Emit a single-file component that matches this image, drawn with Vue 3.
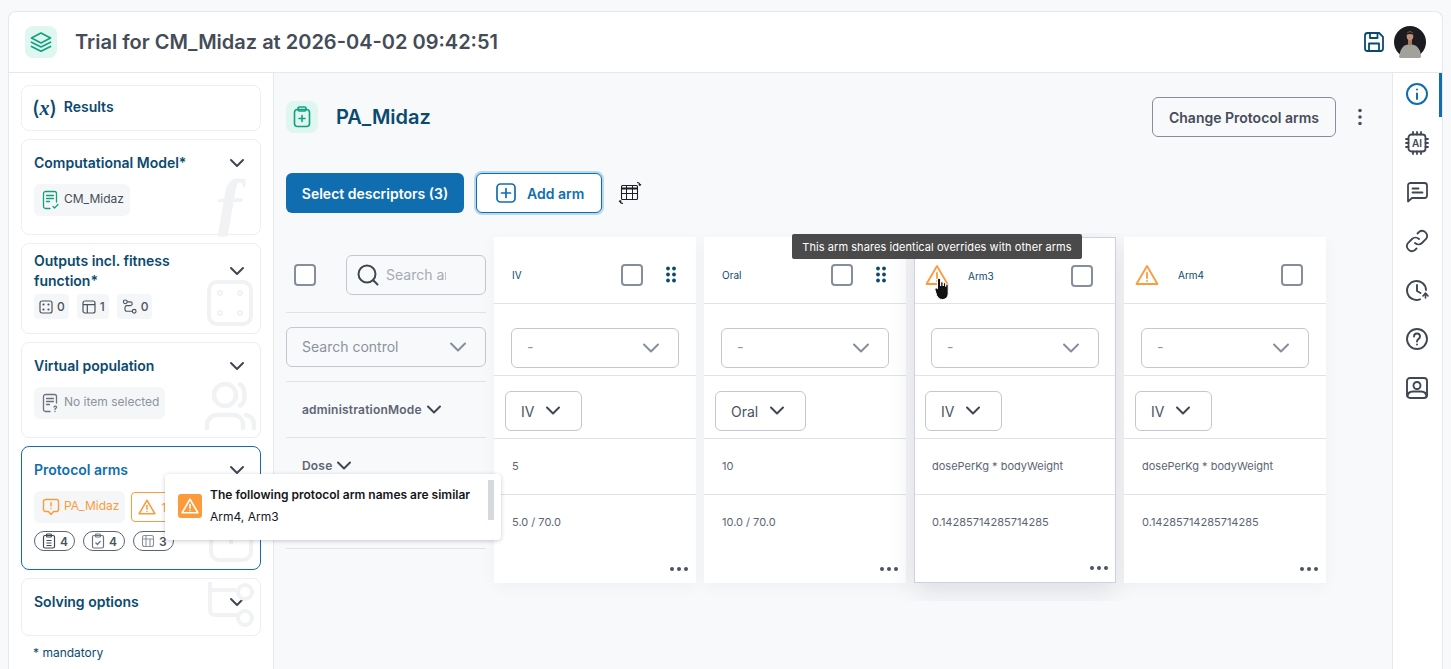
<script setup>
const arms = [
  { name: 'IV', warn: false, hovered: false, mode: 'IV', dose: '5', ratio: '5.0 / 70.0' },
  { name: 'Oral', warn: false, hovered: false, mode: 'Oral', dose: '10', ratio: '10.0 / 70.0' },
  { name: 'Arm3', warn: true, hovered: true, mode: 'IV', dose: 'dosePerKg * bodyWeight', ratio: '0.14285714285714285' },
  { name: 'Arm4', warn: true, hovered: false, mode: 'IV', dose: 'dosePerKg * bodyWeight', ratio: '0.14285714285714285' },
]
const dots = [[1, 1], [7, 1], [1, 7], [7, 7], [1, 13], [7, 13]]
</script>

<template>
  <div class="app">
    <header class="topbar">
      <span class="icon-tile">
        <svg width="24" height="24" viewBox="0 0 24 24" fill="none" stroke="#12a17d" stroke-width="1.700" stroke-linejoin="round" stroke-linecap="round">
          <path d="M12 3 2.500 8 12 13l9.500-5z" />
          <path d="M2.500 12.200 12 17l9.500-4.800" />
          <path d="M2.500 16.400 12 21.200l9.500-4.800" />
        </svg>
      </span>
      <h1>Trial for CM_Midaz at 2026-04-02 09:42:51</h1>
      <svg class="save" width="22" height="22" viewBox="0 0 22 22" fill="none" stroke="#0b4a6f" stroke-width="1.800" stroke-linejoin="round">
        <path d="M2 4.500A2.500 2.500 0 0 1 4.500 2h11.700L20 5.800v11.700a2.500 2.500 0 0 1-2.500 2.500h-13A2.500 2.500 0 0 1 2 17.500z" />
        <path d="M7 2v5h7.500V2M6 20v-7.500h10V20" />
      </svg>
      <svg class="avatar" width="32" height="32" viewBox="0 0 32 32">
        <circle cx="16" cy="16" r="16" fill="#1c1c20" />
        <path d="M5 31c1-6 3-11 7-12l4-1 4 1c4 1 7 6 7 12a16 16 0 0 1-22 0z" fill="#a3a19c" />
        <rect x="14" y="12" width="4" height="7" fill="#a9785f" />
        <ellipse cx="16" cy="10" rx="3.300" ry="4.400" fill="#c09078" />
        <path d="M12.500 9c0-4 7-4 7 0-2-1.500-5-1.500-7 0z" fill="#201a18" />
      </svg>
    </header>

    <div class="body">
      <aside class="sidebar">
        <section class="card results">
          <span class="fx">(<i>x</i>)</span>
          <span class="card-title">Results</span>
        </section>

        <section class="card model">
          <div class="card-head">
            <span class="card-title">Computational Model*</span>
            <svg class="chev" width="18" height="18" viewBox="0 0 18 18"><path d="M3 6l6 6 6-6" /></svg>
          </div>
          <div class="chip">
            <svg width="18" height="20" viewBox="0 0 18 20" fill="none" stroke="#12a17d" stroke-width="1.300" stroke-linecap="round" stroke-linejoin="round">
              <path d="M8 18.500H3.500a2 2 0 0 1-2-2v-13a2 2 0 0 1 2-2h9a2 2 0 0 1 2 2V12" />
              <path d="M4.500 5.500h7M4.500 8.500h7M4.500 11.500h3M11 16.500l1.500 1.500 3.500-3.500" />
            </svg>
            <span class="chip-text">CM_Midaz</span>
          </div>
          <span class="ghost-f">ƒ</span>
        </section>

        <section class="card outputs">
          <div class="card-head">
            <span class="card-title">Outputs incl. fitness function*</span>
            <svg class="chev" width="18" height="18" viewBox="0 0 18 18"><path d="M3 6l6 6 6-6" /></svg>
          </div>
          <div class="mini-row">
            <span class="mini">
              <svg width="14" height="14" viewBox="0 0 14 14" fill="none" stroke="#4a5360" stroke-width="1.200"><rect x="1" y="1" width="12" height="12" rx="2" /><circle cx="4.500" cy="4.500" r=".5" /><circle cx="9.500" cy="4.500" r=".5" /><circle cx="4.500" cy="9.500" r=".5" /><circle cx="9.500" cy="9.500" r=".5" /></svg>
              0
            </span>
            <span class="mini">
              <svg width="14" height="14" viewBox="0 0 14 14" fill="none" stroke="#4a5360" stroke-width="1.200"><rect x="1" y="1" width="12" height="12" rx="2" /><path d="M1 4.700h12M5.300 4.700V13" /></svg>
              1
            </span>
            <span class="mini">
              <svg width="15" height="15" viewBox="0 0 16 16" fill="none" stroke="#4a5360" stroke-width="1.200"><circle cx="3.500" cy="3" r="2" /><circle cx="13" cy="13" r="2" /><path d="M5.500 3H9c2.500 0 2.500 4 0 4H5c-2.500 0-2.500 6 0 6h6" /></svg>
              0
            </span>
          </div>
          <svg class="ghost ghost-die" width="46" height="46" viewBox="0 0 46 46" fill="none" stroke="#f1f2f4" stroke-width="4"><rect x="2" y="2" width="42" height="42" rx="8" /><circle cx="13" cy="13" r="1" /><circle cx="33" cy="13" r="1" /><circle cx="13" cy="33" r="1" /><circle cx="33" cy="33" r="1" /></svg>
        </section>

        <section class="card population">
          <div class="card-head">
            <span class="card-title">Virtual population</span>
            <svg class="chev" width="18" height="18" viewBox="0 0 18 18"><path d="M3 6l6 6 6-6" /></svg>
          </div>
          <div class="chip muted">
            <svg width="18" height="20" viewBox="0 0 18 20" fill="none" stroke="#6b7280" stroke-width="1.300" stroke-linecap="round" stroke-linejoin="round">
              <path d="M8 18.500H3.500a2 2 0 0 1-2-2v-13a2 2 0 0 1 2-2h9a2 2 0 0 1 2 2V10" />
              <path d="M4.500 5.500h7M4.500 8.500h7M4.500 11.500h3M12 14c.5-1.500 3-1 2.500.5-.3.800-1.500.8-1.500 2M13 18.500v.1" />
            </svg>
            <span class="chip-text">No item selected</span>
          </div>
          <svg class="ghost ghost-users" width="52" height="48" viewBox="0 0 52 48" fill="none" stroke="#f1f2f4" stroke-width="4.500" stroke-linecap="round"><circle cx="21" cy="13" r="11" /><path d="M3 46v-3c0-6 5-10 10-10h16c6 0 10 4 10 10v3M36 2.500c6 2 6 19 0 21M42 33c5 1 8 5 8 10v3" /></svg>
        </section>

        <section class="card protocol">
          <div class="card-head">
            <span class="card-title active">Protocol arms</span>
            <svg class="chev" width="18" height="18" viewBox="0 0 18 18"><path d="M3 6l6 6 6-6" /></svg>
          </div>
          <div class="protocol-chips">
            <div class="chip warn">
              <svg width="18" height="18" viewBox="0 0 18 18" fill="none" stroke="#fd9a3b" stroke-width="1.400" stroke-linecap="round" stroke-linejoin="round">
                <path d="M3.500 1.500h11a2 2 0 0 1 2 2v8a2 2 0 0 1-2 2h-3L9 16.500l-2.500-3h-3a2 2 0 0 1-2-2v-8a2 2 0 0 1 2-2zM9 4.500V8M9 10.500v.1" />
              </svg>
              <span class="chip-text">PA_Midaz</span>
            </div>
            <div class="warn-count">
              <svg width="18" height="18" viewBox="0 0 24 24" fill="none" stroke="#fd9a3b" stroke-width="2" stroke-linecap="round" stroke-linejoin="round"><path d="M12 3 1.500 21h21zM12 10v5M12 18v.1" /></svg>
              1
            </div>
          </div>
          <div class="pills">
            <span class="pill">
              <svg width="14" height="16" viewBox="0 0 14 16" fill="none" stroke="#3f4753" stroke-width="1.200"><rect x="1.500" y="2.500" width="11" height="12.500" rx="1.500" /><rect x="4.500" y="1" width="5" height="3" rx="1" /><path d="M4.500 7.500h5M4.500 10h5M4.500 12.500h5" /></svg>
              4
            </span>
            <span class="pill">
              <svg width="14" height="16" viewBox="0 0 14 16" fill="none" stroke="#6b7280" stroke-width="1.200"><rect x="1.500" y="2.500" width="11" height="12.500" rx="1.500" /><rect x="4.500" y="1" width="5" height="3" rx="1" /><path d="M4.500 9.500l2 2 3-3.500" /></svg>
              4
            </span>
            <span class="pill">
              <svg width="14" height="14" viewBox="0 0 14 14" fill="none" stroke="#8b93a0" stroke-width="1.100"><rect x="1.500" y="1.500" width="11" height="11" rx="2" /><path d="M1.500 5h11M5 1.500v11M9 5v7.500" /></svg>
              3
            </span>
          </div>
          <svg class="ghost ghost-plus" width="44" height="30" viewBox="0 0 44 30" fill="none" stroke="#f1f2f4" stroke-width="4"><path d="M2 0v20a8 8 0 0 0 8 8h24a8 8 0 0 0 8-8V0M22 0v12" /></svg>

          <div class="similar-popup">
            <span class="warn-tile">
              <svg width="18" height="18" viewBox="0 0 24 24" fill="none" stroke="#fff" stroke-width="2.200" stroke-linecap="round" stroke-linejoin="round"><path d="M12 3 1.500 21h21zM12 10v5M12 18v.1" /></svg>
            </span>
            <div>
              <div class="popup-title">The following protocol arm names are similar</div>
              <div class="popup-text">Arm4, Arm3</div>
            </div>
            <span class="popup-thumb"></span>
          </div>
        </section>

        <section class="card solving">
          <div class="card-head">
            <span class="card-title">Solving options</span>
            <svg class="chev" width="18" height="18" viewBox="0 0 18 18"><path d="M3 6l6 6 6-6" /></svg>
          </div>
          <svg class="ghost ghost-route" width="46" height="46" viewBox="0 0 46 46" fill="none" stroke="#f1f2f4" stroke-width="4"><path d="M2 0v28a5 5 0 0 0 5 5h23M2 8h26" /><circle cx="37" cy="10" r="7" /><circle cx="37" cy="36" r="7" /></svg>
        </section>

        <p class="mandatory">* mandatory</p>
      </aside>

      <main class="main">
        <div class="page-head">
          <span class="icon-tile">
            <svg width="20" height="22" viewBox="0 0 20 22" fill="none" stroke="#12a17d" stroke-width="1.600" stroke-linecap="round" stroke-linejoin="round">
              <rect x="2.500" y="3.500" width="15" height="17" rx="3" />
              <rect x="6" y="1" width="8" height="4" rx="1.200" />
              <path d="M10 9.500v6M7 12.500h6" />
            </svg>
          </span>
          <h2>PA_Midaz</h2>
          <button class="btn-outline">Change Protocol arms</button>
          <svg class="kebab" width="4" height="18" viewBox="0 0 4 18" fill="#4a5360"><circle cx="2" cy="2.500" r="1.800" /><circle cx="2" cy="9" r="1.800" /><circle cx="2" cy="15.500" r="1.800" /></svg>
        </div>

        <div class="actions">
          <button class="btn-primary">Select descriptors (3)</button>
          <button class="btn-add">
            <svg width="20" height="20" viewBox="0 0 20 20" fill="none" stroke="#106eb0" stroke-width="1.700" stroke-linecap="round"><rect x="1" y="1" width="18" height="18" rx="3.500" /><path d="M10 5.500v9M5.500 10h9" /></svg>
            Add arm
          </button>
          <svg width="24" height="24" viewBox="0 0 24 24" fill="none" stroke="#1d1f24" stroke-width="1.100">
            <rect x="3.500" y="4.500" width="16" height="14" rx="1" />
            <path d="M8.500 4.500v14M14.500 4.500v14M3.500 12.500h16" stroke-width="1" />
            <path d="M3.500 7.500h16" stroke-width="2" />
            <path d="M19 1.500c2 0 3 1 3 3M22 4.500l-1.300-1M22 4.500l1-1.200M5 22.500c-2 0-3-1-3-3M2 19.500l1.300 1M2 19.500l-1 1.200" />
          </svg>
        </div>

        <div class="table">
          <div class="labels">
            <div class="labels-head">
              <span class="checkbox"></span>
              <div class="search">
                <svg width="22" height="22" viewBox="0 0 22 22" fill="none" stroke="#3f4753" stroke-width="2" stroke-linecap="round"><circle cx="10" cy="10" r="8.500" /><path d="m16.500 16.500 4 4" /></svg>
                <span>Search ar</span>
              </div>
            </div>
            <div class="labels-control">
              <div class="select control">
                <span>Search control</span>
                <svg class="chev grey" width="18" height="18" viewBox="0 0 18 18"><path d="M2 5.500l7 7 7-7" /></svg>
              </div>
            </div>
            <div class="label-row">
              administrationMode
              <svg class="chev" width="16" height="16" viewBox="0 0 16 16"><path d="M2 4.500 8 10.500l6-6" /></svg>
            </div>
            <div class="label-row">
              Dose
              <svg class="chev" width="16" height="16" viewBox="0 0 16 16"><path d="M2 4.500 8 10.500l6-6" /></svg>
            </div>
            <div class="label-row"></div>
          </div>

          <div v-for="arm in arms" :key="arm.name" class="arm" :class="{ hovered: arm.hovered }">
            <div class="arm-head" :class="{ warned: arm.warn }">
              <svg v-if="arm.warn" class="arm-warn" width="24" height="24" viewBox="0 0 24 24" fill="none" stroke="#fd9a3b" stroke-width="1.800" stroke-linecap="round" stroke-linejoin="round"><path d="M12 3 1.500 21h21zM12 10v5M12 18v.1" /></svg>
              <span class="arm-name">{{ arm.name }}</span>
              <span class="checkbox"></span>
              <svg v-if="!arm.warn" class="grip" width="10" height="18" viewBox="0 0 10 18" fill="#0b4a6f">
                <circle v-for="d in dots" :key="d.join()" :cx="d[0] + 1" :cy="d[1] + 1.500" r="1.900" />
              </svg>
            </div>
            <div class="arm-control">
              <div class="select">
                <span>-</span>
                <svg class="chev grey" width="18" height="18" viewBox="0 0 18 18"><path d="M2 5.500l7 7 7-7" /></svg>
              </div>
            </div>
            <div class="arm-mode">
              <div class="mode-select">
                {{ arm.mode }}
                <svg class="chev" width="16" height="16" viewBox="0 0 16 16"><path d="M2 4.500 8 10.500l6-6" /></svg>
              </div>
            </div>
            <div class="arm-value">{{ arm.dose }}</div>
            <div class="arm-value last">{{ arm.ratio }}</div>
            <svg class="arm-more" width="20" height="4" viewBox="0 0 20 4" fill="#4a5360"><circle cx="3" cy="2" r="2" /><circle cx="10" cy="2" r="2" /><circle cx="17" cy="2" r="2" /></svg>

            <template v-if="arm.hovered">
              <div class="tooltip">This arm shares identical overrides with other arms</div>
              <svg class="cursor" width="18" height="24" viewBox="0 0 18 24">
                <path d="M5 1.500c1 0 1.600.6 1.600 1.600V9V6c0-1.800 2.600-1.800 2.600 0v3-2c0-1.700 2.500-1.700 2.500 0v2.500-1.300c0-1.600 2.500-1.600 2.500 0V16c0 3.500-2 6.500-5.500 6.500-3 0-4.500-1.200-6-4L1 13c-.8-1.600 1.400-2.800 2.500-1.300V3.100c0-1 .6-1.600 1.500-1.600z" fill="#111" stroke="#fff" stroke-width="1" />
              </svg>
            </template>
          </div>
        </div>
      </main>

      <nav class="rail">
        <span class="rail-mark"></span>
        <svg width="24" height="24" viewBox="0 0 24 24" fill="none" stroke="#106eb0" stroke-width="2" stroke-linecap="round"><circle cx="12" cy="12" r="10" /><path d="M12 11.500V17M12 7.500v.1" /></svg>
        <svg width="24" height="24" viewBox="0 0 24 24" fill="none" stroke="#3f4753" stroke-width="1.800" stroke-linecap="round"><rect x="3.500" y="3.500" width="17" height="17" rx="3" /><path d="M8 1v2.500M12 1v2.500M16 1v2.500M8 20.500V23M12 20.500V23M16 20.500V23M1 8h2.500M1 12h2.500M1 16h2.500M20.500 8H23M20.500 12H23M20.500 16H23" /><text x="12" y="15.500" text-anchor="middle" class="ai-text">AI</text></svg>
        <svg width="24" height="24" viewBox="0 0 24 24" fill="none" stroke="#3f4753" stroke-width="1.800" stroke-linecap="round" stroke-linejoin="round"><path d="M3 5.500a2.500 2.500 0 0 1 2.500-2.500h14A2.500 2.500 0 0 1 22 5.500v10a2.500 2.500 0 0 1-2.500 2.500H7l-4 3.500zM7.500 8.500h6M7.500 12.500h10" /></svg>
        <svg width="24" height="24" viewBox="0 0 24 24" fill="none" stroke="#3f4753" stroke-width="1.800" stroke-linecap="round"><path d="M10 14a5 5 0 0 0 7 0l4-4a5 5 0 0 0-7-7l-1.500 1.500" /><path d="M14 10a5 5 0 0 0-7 0l-4 4a5 5 0 0 0 7 7l1.500-1.500" /></svg>
        <svg width="24" height="24" viewBox="0 0 24 24" fill="none" stroke="#3f4753" stroke-width="1.900" stroke-linecap="round" stroke-linejoin="round"><path d="M21 12a9.500 9.500 0 1 0-6 9.300M12 7v6l3.500 2" /><path d="M18 18l2.500-3 2.500 3M20.500 15.500V20" stroke-width="1.600" /></svg>
        <svg width="24" height="24" viewBox="0 0 24 24" fill="none" stroke="#3f4753" stroke-width="1.900" stroke-linecap="round"><circle cx="12" cy="12" r="10" /><path d="M9 9.500c0-4 6-4 6 0 0 2.500-3 2.500-3 5M12 17.500v.1" /></svg>
        <svg width="24" height="24" viewBox="0 0 24 24" fill="none" stroke="#3f4753" stroke-width="1.900" stroke-linejoin="round"><rect x="2" y="2" width="20" height="20" rx="3" /><circle cx="12" cy="9.500" r="3.500" /><path d="M2.500 21c0-4 2.500-5.500 5.500-5.500h8c3 0 5.500 1.500 5.500 5.500" /></svg>
      </nav>
    </div>
  </div>
</template>

<style scoped>
.app {
  margin: 11px 8px 0;
  height: 658px;
  background: #fff;
  border: 1px solid #e6e8ec;
  border-bottom: 0;
  border-radius: 8px 8px 0 0;
  display: flex;
  flex-direction: column;
  font-family: Inter, "Noto Sans", sans-serif;
  color: #3f4753;
  overflow: hidden;
}
.topbar {
  height: 61px;
  flex: none;
  display: flex;
  align-items: center;
  padding: 0 16px;
  border-bottom: 1px solid #e6e8ec;
  box-sizing: border-box;
}
.icon-tile {
  width: 32px;
  height: 32px;
  border-radius: 8px;
  background: #e0f6f1;
  display: flex;
  align-items: center;
  justify-content: center;
  flex: none;
}
h1 {
  margin: 0 0 0 18px;
  font-size: 20px;
  line-height: 28px;
  font-weight: 600;
  color: #454c58;
  flex: 1;
}
.save { margin-right: 9px; }
.avatar { display: block; }
.body {
  flex: 1;
  display: flex;
  min-height: 0;
}
.sidebar {
  width: 265px;
  flex: none;
  box-sizing: border-box;
  padding: 12px 12px 0;
  border-right: 1px solid #e6e8ec;
  display: flex;
  flex-direction: column;
  gap: 8px;
  position: relative;
  z-index: 2;
}
.card {
  position: relative;
  box-sizing: border-box;
  border: 1px solid #eceef1;
  border-radius: 8px;
  padding: 13px 12px 12px;
  background: #fff;
  width: 240px;
}
.results {
  height: 46px;
  display: flex;
  align-items: center;
  gap: 7px;
  padding-top: 12px;
  padding-bottom: 14px;
}
.fx {
  font-size: 20px;
  color: #0b4a6f;
  font-weight: 500;
  line-height: 1;
  white-space: nowrap;
  margin-left: -2px;
  margin-top: 2px;
}
.fx i {
  font-family: "Liberation Serif", serif;
  font-weight: 700;
}
.card-title {
  font-size: 14px;
  font-weight: 600;
  line-height: 20px;
  color: #0b4a6f;
}
.card-title.active { color: #106eb0; }
.card-head {
  display: flex;
  justify-content: space-between;
  align-items: center;
}
.card-head .card-title { max-width: 175px; }
.chev {
  fill: none;
  stroke: #3f4753;
  stroke-width: 2;
  stroke-linecap: round;
  stroke-linejoin: round;
  flex: none;
}
.card-head .chev { margin-right: 2px; }
.chev.grey { stroke: #868e9c; }
.chip {
  display: inline-flex;
  align-items: center;
  gap: 4px;
  height: 32px;
  box-sizing: border-box;
  padding: 0 6px 0 8px;
  border-radius: 6px;
  background: #f5f6f8;
  font-size: 12px;
  color: #454c58;
  position: relative;
  z-index: 1;
}
.chip-text { margin-bottom: 4px; }
.chip.muted { color: #8b93a0; }
.chip.warn { color: #fd9a3b; }
.model { height: 96px; }
.model .chip { margin-top: 11px; }
.ghost-f {
  position: absolute;
  right: 12px;
  top: 26px;
  font-family: "Liberation Serif", serif;
  font-style: italic;
  font-weight: 700;
  font-size: 72px;
  line-height: 1;
  color: #f1f2f4;
}
.outputs { height: 91px; padding-top: 7px; }
.mini-row {
  display: flex;
  gap: 8px;
  margin-top: 3px;
  position: relative;
  z-index: 1;
}
.mini {
  display: inline-flex;
  align-items: center;
  gap: 4px;
  height: 25px;
  padding: 0 4px 0 5px;
  border-radius: 4px;
  background: #f5f6f8;
  font-size: 12px;
  font-weight: 500;
  color: #4a5360;
}
.ghost { position: absolute; }
.ghost-die { right: 7px; bottom: 7px; }
.population { height: 96px; }
.population .chip { margin-top: 11px; }
.ghost-users { right: 4px; bottom: 7px; }
.protocol {
  height: 124px;
  border-color: #106eb0;
}
.protocol-chips {
  display: flex;
  gap: 6px;
  margin-top: 11px;
  position: relative;
  z-index: 1;
}
.warn-count {
  display: flex;
  align-items: center;
  gap: 5px;
  height: 30px;
  width: 60px;
  margin-top: 1px;
  box-sizing: border-box;
  padding-left: 6px;
  border: 1px solid #fd9a3b;
  border-radius: 4px;
  font-size: 12px;
  color: #fd9a3b;
}
.pills {
  display: flex;
  gap: 8px;
  margin-top: 8px;
  position: relative;
  z-index: 1;
}
.pill {
  display: inline-flex;
  align-items: center;
  gap: 4px;
  height: 20px;
  box-sizing: border-box;
  width: 41px;
  padding-left: 7px;
  border: 1px solid #5d6573;
  border-radius: 10px;
  font-size: 12px;
  font-weight: 600;
  color: #4a5360;
}
.pill:nth-child(2) { width: 42px; }
.ghost-plus { right: 7px; bottom: 7px; }
.similar-popup {
  position: absolute;
  left: 143px;
  top: 27px;
  width: 336px;
  height: 66px;
  z-index: 5;
  box-sizing: border-box;
  padding: 13px 12px 13px 13px;
  display: flex;
  gap: 8px;
  background: #fff;
  border-radius: 4px;
  box-shadow: 0 1px 4px rgba(16, 24, 40, .22);
  white-space: nowrap;
  font-size: 12px;
}
.warn-tile {
  width: 24px;
  height: 24px;
  margin-top: 7px;
  border-radius: 3px;
  background: #fd9a3b;
  display: flex;
  align-items: center;
  justify-content: center;
  flex: none;
}
.popup-title {
  font-size: 12px;
  font-weight: 600;
  line-height: 16px;
  color: #14161a;
}
.popup-text {
  margin-top: 6px;
  line-height: 16px;
  color: #14161a;
}
.popup-thumb {
  position: absolute;
  right: 7px;
  top: 6px;
  width: 6px;
  height: 40px;
  background: #d5d8dd;
}
.solving { height: 58px; padding-top: 13px; }
.ghost-route { right: 6px; bottom: 7px; }
.mandatory {
  margin: 1px 0 0 12px;
  font-size: 12px;
  line-height: 16px;
  color: #0b4a6f;
}
.main {
  flex: 1;
  min-width: 0;
  background: #f8f9fb;
  padding: 24px 12px 0;
  box-sizing: border-box;
  overflow: hidden;
}
.page-head {
  display: flex;
  align-items: center;
  height: 40px;
}
h2 {
  margin: 0 0 0 18px;
  font-size: 20px;
  font-weight: 600;
  color: #0b4a6f;
  flex: 1;
}
.btn-outline {
  width: 184px;
  height: 40px;
  background: transparent;
  border: 1px solid #868e9c;
  border-radius: 6px;
  font: 600 14px Inter, sans-serif;
  color: #454c58;
}
.kebab { margin: 0 18px 0 22px; }
.actions {
  display: flex;
  align-items: center;
  gap: 12px;
  margin-top: 36px;
}
.btn-primary {
  width: 178px;
  height: 40px;
  border: 0;
  border-radius: 6px;
  background: #106eb0;
  color: #fff;
  font: 600 14px Inter, sans-serif;
}
.btn-add {
  width: 126px;
  height: 40px;
  display: flex;
  align-items: center;
  gap: 11px;
  padding: 0 0 0 19px;
  border: 1px solid #106eb0;
  border-radius: 6px;
  background: #fff;
  box-shadow: 0 0 0 2px #b9d8ee;
  color: #106eb0;
  font: 600 14px Inter, sans-serif;
}
.actions > svg { margin-left: 4px; }
.table {
  display: flex;
  gap: 8px;
  margin-top: 20px;
  padding: 4px 0 18px;
  overflow: hidden;
  align-items: flex-start;
}
.labels { width: 200px; flex: none; font-size: 12px; }
.labels-head {
  height: 76px;
  display: flex;
  align-items: center;
  gap: 30px;
  padding-left: 8px;
  border-bottom: 1px solid #dfe2e7;
  box-sizing: border-box;
}
.checkbox {
  width: 22px;
  height: 22px;
  box-sizing: border-box;
  border: 2px solid #868e9c;
  border-radius: 4px;
  flex: none;
  background: #fff;
}
.search {
  width: 140px;
  height: 40px;
  box-sizing: border-box;
  border: 1px solid #c3c8d0;
  border-radius: 6px;
  display: flex;
  align-items: center;
  gap: 7px;
  padding-left: 10px;
  overflow: hidden;
  font-size: 14px;
  color: #a5abb5;
  white-space: nowrap;
}
.search span { width: 60px; overflow: hidden; }
.labels-control {
  height: 69px;
  box-sizing: border-box;
  padding-top: 14px;
  border-bottom: 1px solid #dfe2e7;
}
.select {
  width: 168px;
  height: 40px;
  box-sizing: border-box;
  border: 1px solid #c3c8d0;
  border-radius: 6px;
  display: flex;
  align-items: center;
  justify-content: space-between;
  padding: 0 18px 0 15px;
  font-size: 14px;
  color: #8b93a0;
  background: #fff;
}
.select span { margin-bottom: 2px; }
.select.control { width: 200px; background: transparent; }
.label-row {
  height: 56px;
  display: flex;
  align-items: center;
  gap: 4px;
  padding-left: 16px;
  font-weight: 600;
  font-size: 12px;
  letter-spacing: .2px;
  color: #5d6573;
  border-bottom: 1px solid #dfe2e7;
  box-sizing: border-box;
}
.label-row:last-child { height: 55px; }
.arm {
  width: 202px;
  height: 346px;
  flex: none;
  box-sizing: border-box;
  background: #fff;
  position: relative;
  box-shadow: 0 4px 16px rgba(16, 24, 40, .04);
}
.arm.hovered {
  border: 1px solid #cfd0e4;
  box-shadow: 0 8px 24px rgba(16, 24, 40, .12);
}
.arm-head {
  height: 67px;
  display: flex;
  align-items: center;
  padding: 10px 20px 0 18px;
  border-bottom: 1px solid #dfe2e7;
  box-sizing: border-box;
  position: relative;
}
.arm-head.warned { padding-right: 23px; }
.arm-warn { position: absolute; left: 11px; top: 26px; }
.hovered .arm-warn { left: 10px; top: 25px; }
.arm-name {
  flex: 1;
  font-size: 10px;
  color: #0b4a6f;
}
.arm-warn + .arm-name { padding-left: 36px; }
.grip { margin-left: 23px; }
.hovered .arm-head { padding-left: 17px; padding-right: 22px; height: 66px; }
.arm-control {
  height: 72px;
  display: flex;
  align-items: center;
  justify-content: center;
  padding-top: 16px;
  border-bottom: 1px solid #dfe2e7;
  box-sizing: border-box;
}
.arm-mode {
  height: 63px;
  display: flex;
  align-items: center;
  padding: 8px 0 0 11px;
  border-bottom: 1px solid #dfe2e7;
  box-sizing: border-box;
}
.hovered .arm-mode { padding-left: 10px; }
.mode-select {
  height: 40px;
  box-sizing: border-box;
  border: 1px solid #c3c8d0;
  border-radius: 6px;
  display: flex;
  align-items: center;
  gap: 11px;
  padding: 0 20px 0 15px;
  font-size: 14px;
  color: #4a5360;
}
.arm-value {
  height: 56px;
  display: flex;
  align-items: center;
  padding: 0 0 1px 18px;
  font-size: 11px;
  color: #5d6573;
  border-bottom: 1px solid #dfe2e7;
  box-sizing: border-box;
}
.hovered .arm-value { padding-left: 17px; }
.arm-value.last { border-bottom: 0; padding-bottom: 3px; }
.arm-more { position: absolute; right: 7px; bottom: 12px; }
.hovered .arm-more { right: 6px; }
.tooltip {
  position: absolute;
  left: -123px;
  top: -4px;
  width: 290px;
  height: 25px;
  display: flex;
  align-items: center;
  justify-content: center;
  background: #4a4a4a;
  border-radius: 2px;
  color: #fff;
  font-size: 11px;
  letter-spacing: .06px;
  white-space: nowrap;
  z-index: 3;
}
.cursor { position: absolute; left: 19px; top: 39px; z-index: 3; }
.rail {
  width: 50px;
  flex: none;
  border-left: 1px solid #e6e8ec;
  box-sizing: border-box;
  display: flex;
  flex-direction: column;
  align-items: center;
  gap: 25px;
  padding: 9px 2px 0 0;
  position: relative;
}
.rail-mark {
  position: absolute;
  right: 0;
  top: 0;
  width: 3px;
  height: 44px;
  background: #106eb0;
}
.ai-text {
  font: 600 10px Inter, sans-serif;
  fill: #3f4753;
  stroke: none;
}
</style>

<style>
body { background: #f8f9fb; overflow: hidden; }
</style>
